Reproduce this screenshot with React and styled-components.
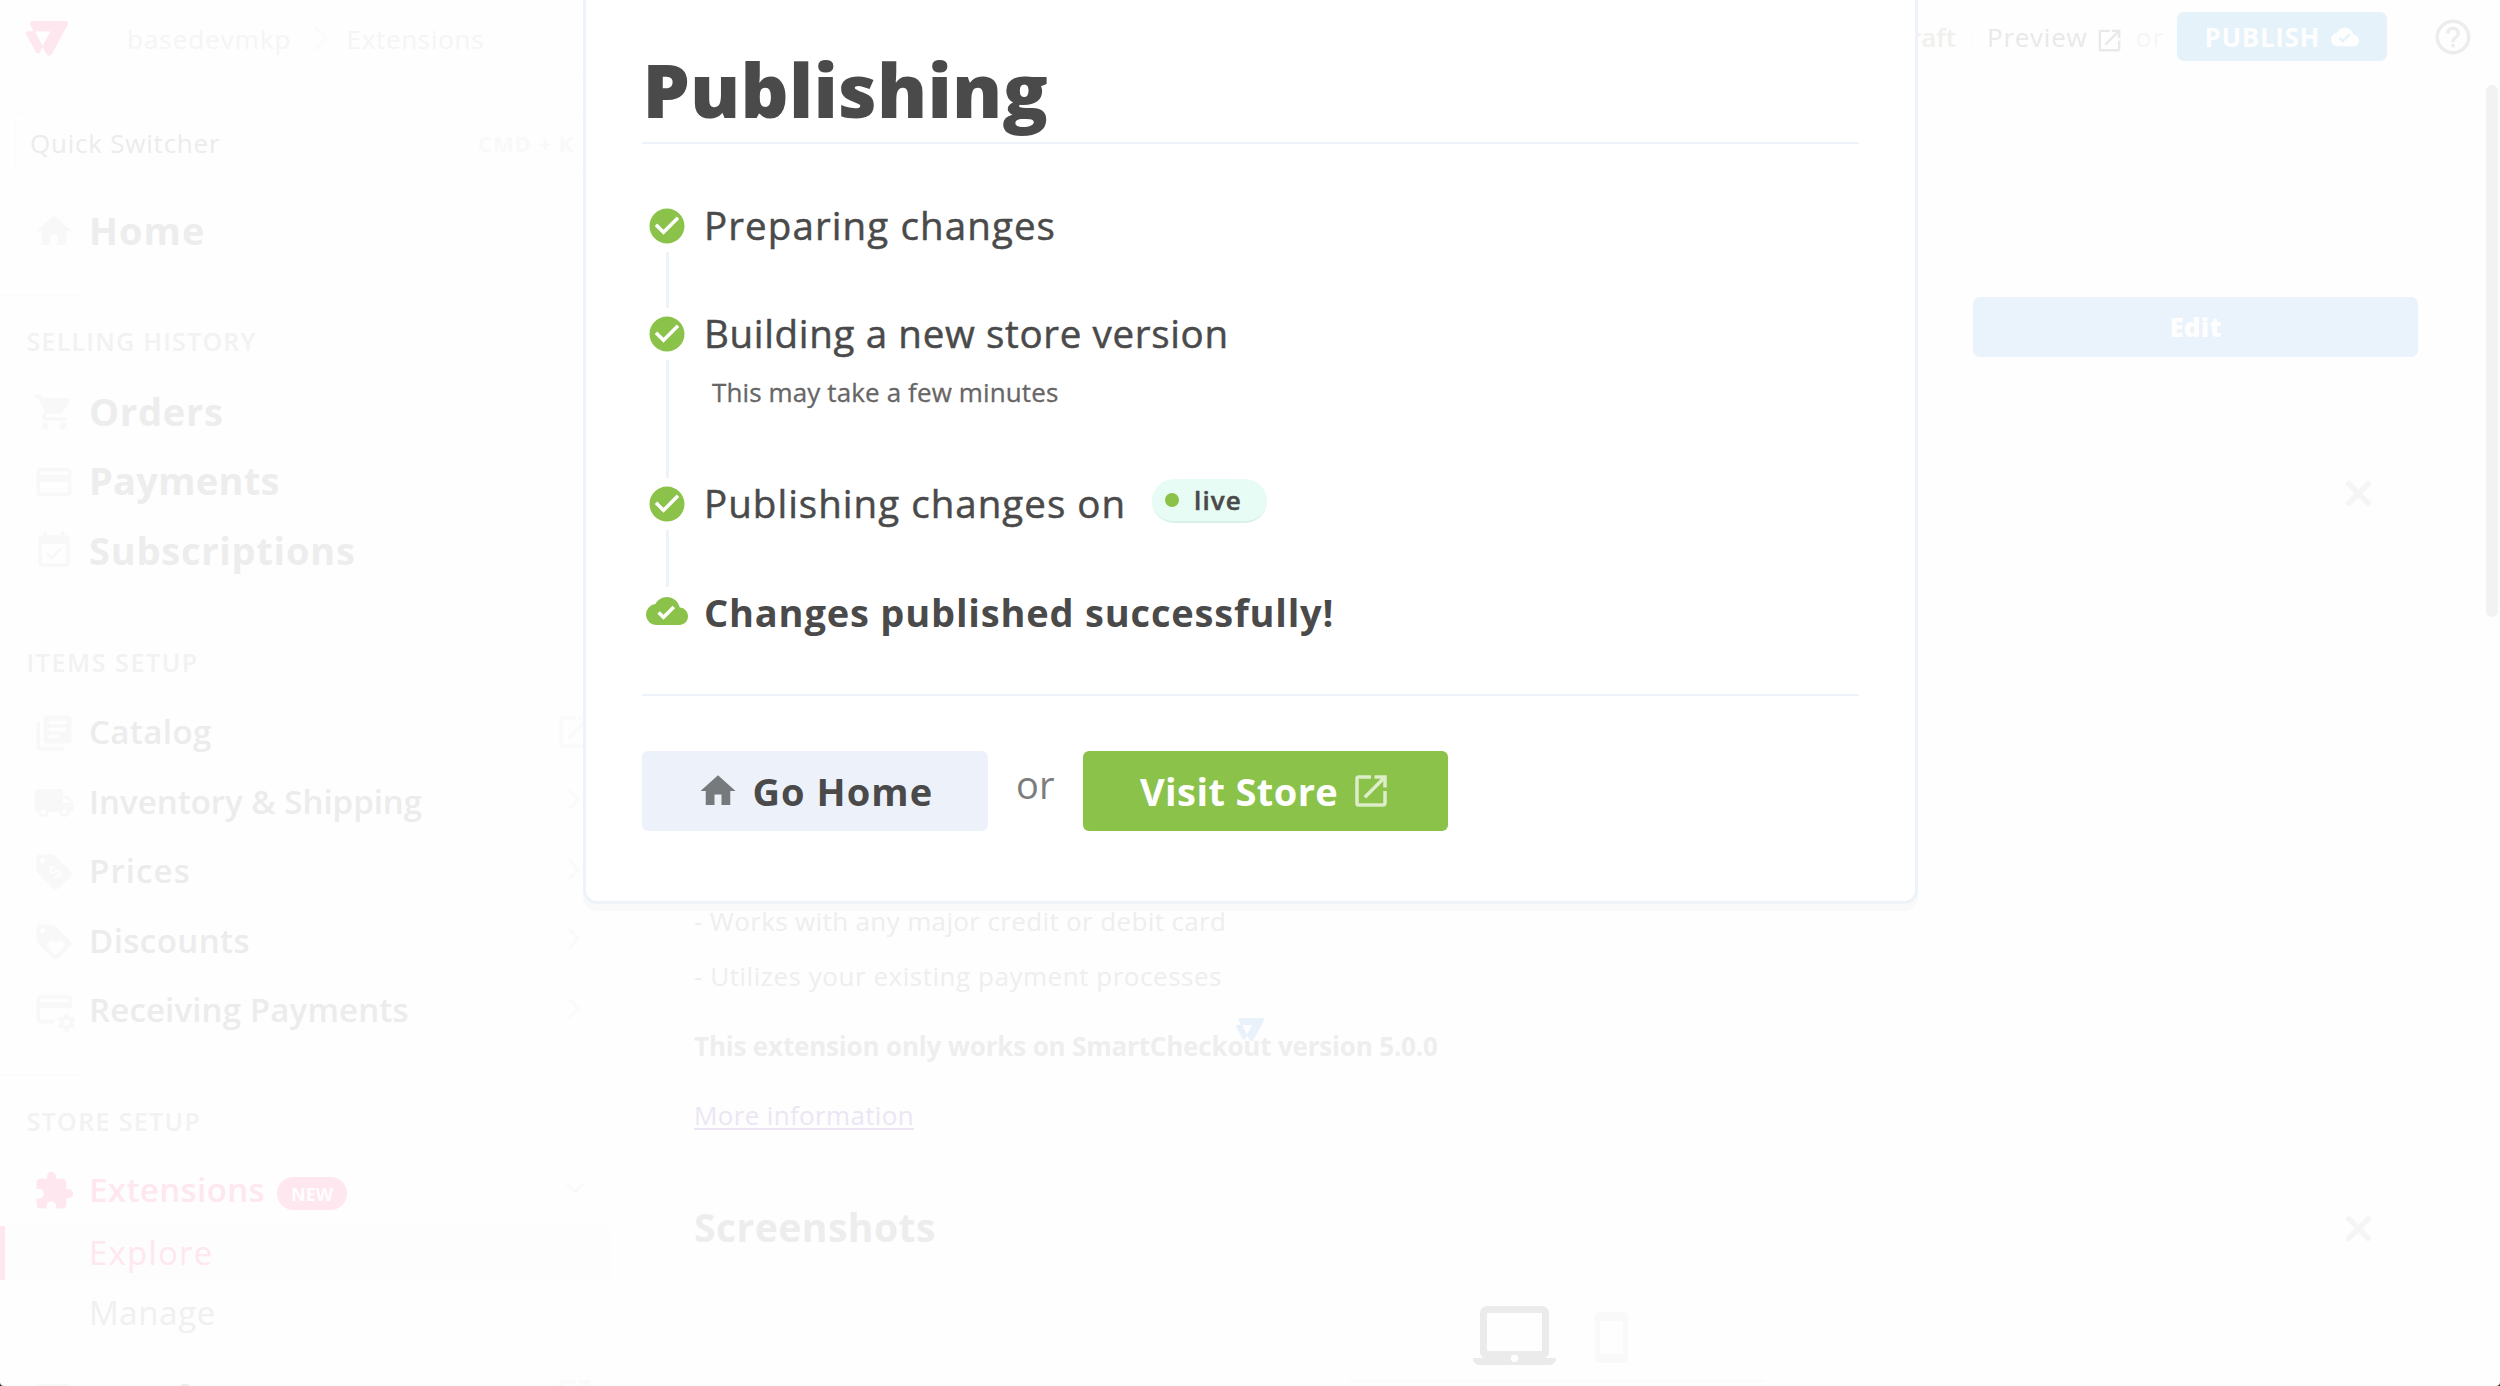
import React from 'react';
import styled, { createGlobalStyle, css } from 'styled-components';
import {
  MdHome,
  MdShoppingCart,
  MdEventAvailable,
  MdLibraryBooks,
  MdLocalShipping,
  MdLoyalty,
  MdExtension,
  MdOpenInNew,
  MdCheckCircle,
  MdCloudDone,
  MdHelpOutline,
} from 'react-icons/md';

const c = {
  page: '#fefefe',
  ghost: '#ececec',
  pink: '#ffe7ef',
  line: '#edf3f9',
  ink: '#4a4a4a',
  green: '#8bc34a',
};

const GlobalStyle = createGlobalStyle`
  * { box-sizing: border-box; }
  html { background: #2b2b2b; }
  body { margin: 0; }
  svg { display: block; flex: none; }
`;

const Page = styled.div`
  position: relative;
  display: flex;
  flex-direction: column;
  height: 100vh;
  overflow: hidden;
  background: ${c.page};
  border-radius: 0 0 4px 4px;
  font-family: 'Open Sans', 'Noto Sans', sans-serif;
  color: ${c.ghost};
  white-space: nowrap;
`;

const Label = styled.span`
  letter-spacing: ${(p) => p.$track || 0}px;
`;

/* ---------- top bar ---------- */

const TopBar = styled.header`
  flex: none;
  display: flex;
  align-items: flex-start;
  height: 80px;
  border-bottom: 2px solid #fdfdfd;
  font-size: 26px;
`;

const LogoCell = styled.div`
  width: 98px;
  height: 78px;
  padding: 21px 0 0 26px;
  border-right: 1px solid #fcfcfc;
`;

const Crumbs = styled.nav`
  display: flex;
  align-items: center;
  height: 78px;
  padding-left: 29px;
  color: #f5f5f5;
`;

const CrumbArrow = styled.svg`
  margin: 0 17px 2px 22px;
`;

const TopActions = styled.div`
  display: flex;
  align-items: center;
  height: 73px;
  margin-left: auto;
  padding-right: 26px;
`;

const DraftTag = styled.span`
  color: #f0f0ec;
  font-weight: 600;
`;

const Divider = styled.i`
  width: 1px;
  height: ${(p) => p.$h}px;
  margin: 0 14px 0 ${(p) => p.$before}px;
  background: #fcfcfc;
`;

const PreviewLink = styled.a`
  display: flex;
  align-items: center;
  justify-content: space-between;
  width: 136.5px;
  color: #e9e9e9;

  svg {
    margin-top: 7px;
  }
`;

const OrWord = styled.span`
  width: 53px;
  text-align: center;
  color: #f6f6f6;
`;

const PublishButton = styled.button`
  display: flex;
  align-items: center;
  justify-content: space-between;
  width: 210.5px;
  height: 49px;
  padding: 0 28px;
  border: 0;
  border-radius: 7px;
  background: #e5f2fa;
  color: ${c.page};
  font: 700 26px 'Open Sans', sans-serif;
`;

const HelpCell = styled.div`
  display: flex;
  align-items: center;
  color: #ededed;
  padding-left: 15px;
`;

/* ---------- sidebar ---------- */

const Body = styled.div`
  flex: 1;
  min-height: 0;
  display: flex;
`;

const Sidebar = styled.aside`
  flex: none;
  display: flex;
  flex-direction: column;
  width: 610px;
  padding-top: 32px;
`;

const Switcher = styled.div`
  flex: none;
  display: flex;
  align-items: center;
  justify-content: space-between;
  height: 62px;
  margin: 0 0 21px 15px;
  padding: 0 36px 0 14px;
  border: 1px solid #fcfcfc;
  border-right: 0;
  border-radius: 4px 0 0 4px;
  font-size: 26px;
`;

const Shortcut = styled.span`
  color: #f9f9f9;
  font-size: 22px;
  font-weight: 700;
`;

const Section = styled.section`
  flex: none;
  margin-top: ${(p) => p.$gap || 29.5}px;
  background: linear-gradient(#fcfcfc, #fcfcfc) no-repeat 0 0 / 82px 2px;
  padding-top: 2px;
`;

const SectionTitle = styled.h3`
  display: flex;
  align-items: center;
  height: 80px;
  margin: 0;
  padding: 10px 0 0 26.5px;
  color: #f2f2f2;
  font-size: 25px;
  font-weight: 600;
`;

const NavRow = styled.a`
  flex: none;
  display: flex;
  align-items: center;
  height: ${(p) => p.$h || 69.5}px;
  padding: 0 14px 0 33px;
  font-size: ${(p) => (p.$big ? 38 : 33)}px;
  font-weight: ${(p) => (p.$big ? 700 : 600)};
  color: ${(p) => (p.$active ? c.pink : p.$big ? '#ededed' : c.ghost)};
`;

const NavIcon = styled.span`
  width: 56px;
  padding-top: 3px;
  color: ${(p) => (p.$active ? c.pink : '#f8f8f8')};
`;

const NavEnd = styled.span`
  margin-left: auto;
  color: #fafafa;
`;

const NewBadge = styled.span`
  display: flex;
  align-items: center;
  justify-content: center;
  width: 70px;
  height: 33px;
  margin: 8px 0 0 12px;
  border-radius: 17px;
  background: ${c.pink};
  color: ${c.page};
  font-size: 18px;
  font-weight: 700;
`;

const SubRow = styled.a`
  flex: none;
  display: flex;
  align-items: center;
  height: 54px;
  margin-top: ${(p) => p.$gap}px;
  padding-left: 84px;
  border-left: 5px solid transparent;
  font-size: 33px;
  color: #f0f0f0;
  ${(p) =>
    p.$active &&
    css`
      border-left-color: ${c.pink};
      background: #fdfdfd;
      color: ${c.pink};
    `}
`;

/* ---------- main column ---------- */

const Main = styled.main`
  position: relative;
  z-index: 1;
  flex: 1;
  display: flex;
  flex-direction: column;
  padding: 217px 82px 0 84px;
`;

const EditButton = styled.button`
  flex: none;
  align-self: flex-end;
  width: 445px;
  height: 60px;
  border: 0;
  border-radius: 7px;
  background: #eaf2fc;
  color: ${c.page};
  font: 800 26px 'Open Sans', sans-serif;
`;

const PanelHead = styled.div`
  flex: none;
  display: flex;
  align-items: center;
  justify-content: space-between;
  height: ${(p) => p.$h}px;
  padding-right: 46px;
  font-size: 39px;
  font-weight: 700;
  color: #ededed;

  svg {
    margin-top: 3px;
  }
`;

const Article = styled.div`
  flex: none;
  height: 528.5px;
  padding-top: 266.5px;
  border-bottom: 1px solid #fcfcfc;
  font-size: 26px;
  line-height: 55.5px;
  color: #eeeeee;
`;

const Line = styled.div``;

const Note = styled.p`
  margin: 14px 0;
  font-weight: 700;
`;

const MoreLink = styled.a`
  color: #ece6f4;
  text-decoration: underline;
  text-decoration-thickness: 2px;
  text-underline-offset: 3px;
`;

const Devices = styled.div`
  align-self: center;
  display: flex;
  align-items: flex-start;
  justify-content: center;
  gap: 39px;
  width: 417px;
  height: 84px;
  padding: 8px 12px 0 0;
  border-bottom: 2px solid #fbfbfb;
`;

const PhoneShape = styled.svg`
  margin-top: 6px;
`;

const ScrollThumb = styled.div`
  position: absolute;
  top: 85px;
  right: 2px;
  width: 12px;
  height: 532px;
  border-radius: 6px;
  background: #f2f2f2;
`;

const Loader = styled.div`
  position: absolute;
  left: 1236px;
  top: 1018px;
`;

/* ---------- publishing dialog ---------- */

const Dialog = styled.section`
  position: absolute;
  z-index: 2;
  top: -20px;
  left: 583px;
  width: 1334.5px;
  height: 924px;
  padding: 56px 56px 0 55.5px;
  border: 3px solid ${c.line};
  border-radius: 14px;
  background: #fff;
  box-shadow: 0 7px 1px #f9f9f9;
  color: ${c.ink};
`;

const DialogTitle = styled.h1`
  margin: 0;
  padding: 0 0 3px 1px;
  border-bottom: 2px solid ${c.line};
  font-size: 75px;
  line-height: 100px;
  font-weight: 800;
`;

const Steps = styled.ol`
  display: flex;
  flex-direction: column;
  height: 551.5px;
  margin: 0;
  padding: 56px 0 0;
  list-style: none;
  border-bottom: 2px solid ${c.line};
`;

const Step = styled.li`
  display: grid;
  grid-template-columns: 51px 1fr;
  column-gap: 11.5px;
  height: ${(p) => p.$h}px;
`;

const Marker = styled.div`
  display: flex;
  flex-direction: column;
  align-items: center;
  color: ${c.green};

  svg {
    margin: ${(p) => (p.$last ? 3 : 4.5)}px 0 3px;
  }
`;

const Connector = styled.i`
  flex: 1;
  width: 3px;
  margin-top: 2px;
  background: ${c.line};
`;

const StepTitle = styled.div`
  display: flex;
  height: 50px;
  line-height: 50px;
  font-size: ${(p) => (p.$done ? 38 : 38.5)}px;
  font-weight: ${(p) => (p.$done ? 700 : 400)};
  -webkit-text-stroke: ${(p) => (p.$done ? 0 : 0.5)}px currentColor;
`;

const StepHint = styled.div`
  padding: 17px 0 0 8px;
  font-size: 26px;
  line-height: 34px;
  color: #666;
  -webkit-text-stroke: 0.3px currentColor;
`;

const LiveBadge = styled.span`
  display: flex;
  align-items: center;
  gap: 15px;
  width: 115px;
  height: 44px;
  margin: 1px 0 0 26px;
  padding-left: 13px;
  border-bottom: 2px solid #d8f2e9;
  border-radius: 22px;
  background: #e7fcf5;
  font-size: 26px;
  line-height: 40px;
  font-weight: 600;

  &::before {
    content: '';
    width: 14px;
    height: 14px;
    border-radius: 50%;
    background: ${c.green};
  }
`;

const Actions = styled.div`
  display: flex;
  align-items: center;
  padding-top: 55.5px;
  font-size: 38px;
`;

const ActionButton = styled.button`
  display: flex;
  align-items: center;
  gap: ${(p) => (p.$primary ? 12 : 14)}px;
  height: 80px;
  width: ${(p) => (p.$primary ? 365 : 346)}px;
  padding: 0 0 0 ${(p) => (p.$primary ? 57 : 55)}px;
  border: 0;
  border-radius: 6px;
  background: ${(p) => (p.$primary ? c.green : '#edf1fa')};
  color: ${(p) => (p.$primary ? '#fff' : c.ink)};
  font: 700 38px 'Open Sans', sans-serif;

  svg {
    color: ${(p) => (p.$primary ? '#dcedc8' : '#777a7d')};
  }
`;

const ActionOr = styled.span`
  width: 95.5px;
  padding-bottom: 15px;
  text-align: center;
  color: #7d7d7d;
`;

/* ---------- drawings ---------- */

const BrandMark = ({ width, color }) => (
  <svg width={width} height={width * 0.835} viewBox="48 47 127 106" fill={color}>
    <path
      fillRule="evenodd"
      d="M70 47H166a8 8 0 0 1 8 12L126 147a9 9 0 0 1-16 0L98 125 90 142a7 7 0 0 1-12 0L49 88a6 6 0 0 1 5-10H70L62 60a8 8 0 0 1 8-13zM75 79 98 122 122 79z"
    />
  </svg>
);

const Chevron = ({ down }) => (
  <svg width="42" height="42" viewBox="0 0 42 42" fill="none" stroke="currentColor" strokeWidth="3">
    {down ? <path d="M12 14l9 9 9-9" /> : <path d="M15 10l9 9.500-9 9.500" />}
  </svg>
);

const CardIcon = () => (
  <svg width="42" height="42" viewBox="0 0 24 24" fill="currentColor">
    <path d="M20 4H4c-1.110 0-2 .89-2 2v12c0 1.110.89 2 2 2h16c1.110 0 2-.89 2-2V6c0-1.110-.89-2-2-2zm0 14H4v-6h16v6zm0-10H4V6h16v2z" />
  </svg>
);

const CardGearIcon = () => (
  <svg width="46" height="46" viewBox="0 0 26 26" fill="currentColor">
    <path d="M20 4H4c-1.110 0-2 .89-2 2v12c0 1.110.89 2 2 2h8v-2H4v-6.500h18V6c0-1.110-.89-2-2-2zm0 4H4V6h16z" />
    <g transform="translate(19 19.500)">
      <circle r="2.700" fill="none" stroke="currentColor" strokeWidth="2" />
      {[0, 60, 120, 180, 240, 300].map((a) => (
        <rect key={a} x="-1.200" y="-5" width="2.400" height="2.200" transform={`rotate(${a})`} />
      ))}
    </g>
  </svg>
);

const PriceTagIcon = () => (
  <svg width="42" height="42" viewBox="0 0 24 24" fill="currentColor">
    <path
      fillRule="evenodd"
      d="M21.410 11.580l-9-9C12.050 2.220 11.550 2 11 2H4c-1.100 0-2 .9-2 2v7c0 .55.22 1.050.59 1.420l9 9c.36.36.86.58 1.410.58.55 0 1.050-.22 1.410-.59l7-7c.37-.36.59-.86.59-1.410 0-.55-.23-1.060-.59-1.420zM5.500 7C4.670 7 4 6.330 4 5.500S4.670 4 5.500 4 7 4.670 7 5.500 6.330 7 5.500 7z"
    />
    <path
      d="M14.500 10.200c-.5-1.400-3.900-1.400-3.900.4 0 1.900 4.200 1 4.200 3 0 1.900-3.900 1.900-4.300.3M12.650 8v1.300M12.650 14.900v1.300"
      transform="rotate(-45 12.600 12.100)"
      fill="none"
      stroke={c.page}
      strokeWidth="1.100"
    />
  </svg>
);

const WindowIcon = () => (
  <svg width="42" height="42" viewBox="0 0 24 24" fill="currentColor">
    <path d="M20 4H4c-1.100 0-2 .9-2 2v12c0 1.100.9 2 2 2h16c1.100 0 2-.9 2-2V6c0-1.100-.9-2-2-2zm-5 14H4v-4h11v4zm0-5H4V9h11v4zm5 5h-4V9h4v9z" />
  </svg>
);

const CloseIcon = () => (
  <svg width="27" height="27" viewBox="0 0 27 27" stroke="#f5f5f5" strokeWidth="5.500">
    <path d="M2 2l23 23M25 2L2 25" />
  </svg>
);

const Laptop = () => (
  <svg width="83" height="59" viewBox="0 0 83 59" fill="#ebebeb">
    <path
      fillRule="evenodd"
      d="M14 0h55a7 7 0 0 1 7 7v38a7 7 0 0 1-4 7h11q0 6-6 7H6q-6-1-6-7h11a7 7 0 0 1-4-7V7a7 7 0 0 1 7-7zM14 7v38h55V7zM41.500 48.500a3.800 3.800 0 1 0 .01 0z"
    />
  </svg>
);

const Phone = () => (
  <PhoneShape width="33" height="51" viewBox="0 0 33 51" fill="#f9f9f9">
    <path fillRule="evenodd" d="M5 0h23a5 5 0 0 1 5 5v41a5 5 0 0 1-5 5H5a5 5 0 0 1-5-5V5a5 5 0 0 1 5-5zM5 9v33h23V9z" />
  </PhoneShape>
);

/* ---------- data ---------- */

const sections = [
  {
    title: 'SELLING HISTORY',
    track: 1.24,
    big: true,
    rows: [
      { text: 'Orders', track: 0.75, icon: <MdShoppingCart size={42} /> },
      { text: 'Payments', track: 0.25, icon: <CardIcon /> },
      { text: 'Subscriptions', track: 0.76, icon: <MdEventAvailable size={42} /> },
    ],
  },
  {
    title: 'ITEMS SETUP',
    track: 1.6,
    gap: 30.5,
    rows: [
      { text: 'Catalog', track: 0.4, icon: <MdLibraryBooks size={42} />, end: <MdOpenInNew size={42} /> },
      { text: 'Inventory & Shipping', track: 0, icon: <MdLocalShipping size={42} />, end: <Chevron /> },
      { text: 'Prices', track: 1.1, icon: <PriceTagIcon />, end: <Chevron /> },
      { text: 'Discounts', track: 0.45, icon: <MdLoyalty size={42} />, end: <Chevron /> },
      { text: 'Receiving Payments', track: 0.15, icon: <CardGearIcon />, end: <Chevron /> },
    ],
  },
];

const NavItem = ({ text, track, icon, end, big }) => (
  <NavRow $big={big}>
    <NavIcon>{icon}</NavIcon>
    <Label $track={track}>{text}</Label>
    {end && <NavEnd>{end}</NavEnd>}
  </NavRow>
);

const StepItem = ({ height, text, track, hint, last, children }) => (
  <Step $h={height}>
    <Marker $last={last}>
      {last ? <MdCloudDone size={42} /> : <MdCheckCircle size={42} />}
      {!last && <Connector />}
    </Marker>
    <div>
      <StepTitle $done={last}>
        <Label $track={track}>{text}</Label>
        {children}
      </StepTitle>
      {hint && (
        <StepHint>
          <Label $track={0.12}>{hint}</Label>
        </StepHint>
      )}
    </div>
  </Step>
);

export default function App() {
  return (
    <Page>
      <GlobalStyle />
      <TopBar>
        <LogoCell>
          <BrandMark width={42} color={c.pink} />
        </LogoCell>
        <Crumbs>
          <Label $track={1}>basedevmkp</Label>
          <CrumbArrow width="16" height="26" viewBox="0 0 16 26" fill="none" stroke="#fbfbfb" strokeWidth="3">
            <path d="M2 1.500l11 11.500L2 24.500" />
          </CrumbArrow>
          <Label $track={0.7}>Extensions</Label>
        </Crumbs>
        <TopActions>
          <DraftTag>Draft</DraftTag>
          <Divider $h={24} $before={16} />
          <PreviewLink>
            <Label $track={0.75}>Preview</Label>
            <MdOpenInNew size={29} />
          </PreviewLink>
          <OrWord>
            <Label $track={1}>or</Label>
          </OrWord>
          <PublishButton>
            <Label $track={0.66}>PUBLISH</Label>
            <MdCloudDone size={28} />
          </PublishButton>
          <Divider $h={73} $before={15} />
          <HelpCell>
            <MdHelpOutline size={42} />
          </HelpCell>
        </TopActions>
      </TopBar>

      <Body>
        <Sidebar>
          <Switcher>
            <Label $track={0.78}>Quick Switcher</Label>
            <Shortcut>
              <Label $track={0.9}>CMD + K</Label>
            </Shortcut>
          </Switcher>
          <NavItem text="Home" track={1} big icon={<MdHome size={42} />} />
          {sections.map((s) => (
            <Section key={s.title} $gap={s.gap}>
              <SectionTitle>
                <Label $track={s.track}>{s.title}</Label>
              </SectionTitle>
              {s.rows.map((r) => (
                <NavItem key={r.text} big={s.big} {...r} />
              ))}
            </Section>
          ))}
          <Section $gap={29}>
            <SectionTitle>
              <Label $track={1.37}>STORE SETUP</Label>
            </SectionTitle>
            <NavRow $active $h={68}>
              <NavIcon $active>
                <MdExtension size={42} />
              </NavIcon>
              <Label $track={0.4}>Extensions</Label>
              <NewBadge>NEW</NewBadge>
              <NavEnd>
                <Chevron down />
              </NavEnd>
            </NavRow>
            <SubRow $active $gap={2}>
              <Label $track={1.2}>Explore</Label>
            </SubRow>
            <SubRow $gap={6}>
              <Label $track={0.65}>Manage</Label>
            </SubRow>
          </Section>
          <NavRow $h={113}>
            <NavIcon>
              <WindowIcon />
            </NavIcon>
            <Label $track={0.4}>Storefront</Label>
            <NavEnd>
              <MdOpenInNew size={42} />
            </NavEnd>
          </NavRow>
        </Sidebar>

        <Main>
          <EditButton>
            <Label $track={0.19}>Edit</Label>
          </EditButton>
          <PanelHead $h={270}>
            <span />
            <CloseIcon />
          </PanelHead>
          <Article>
            <Line>
              <Label $track={0.36}>- Works with any major credit or debit card</Label>
            </Line>
            <Line>
              <Label $track={0.53}>- Utilizes your existing payment processes</Label>
            </Line>
            <Note>
              <Label $track={-0.18}>This extension only works on SmartCheckout version 5.0.0</Label>
            </Note>
            <MoreLink>
              <Label $track={0.35}>More information</Label>
            </MoreLink>
          </Article>
          <PanelHead $h={142}>
            <Label $track={0.5}>Screenshots</Label>
            <CloseIcon />
          </PanelHead>
          <Devices>
            <Laptop />
            <Phone />
          </Devices>
        </Main>
      </Body>

      <Loader>
        <BrandMark width={28} color="#e9f1fa" />
      </Loader>
      <ScrollThumb />

      <Dialog>
        <DialogTitle>
          <Label $track={0.2}>Publishing</Label>
        </DialogTitle>
        <Steps>
          <StepItem height={108} text="Preparing changes" track={1.1} />
          <StepItem
            height={170}
            text="Building a new store version"
            track={0.66}
            hint="This may take a few minutes"
          />
          <StepItem height={109} text="Publishing changes on" track={1.02}>
            <LiveBadge>
              <Label $track={1.1}>live</Label>
            </LiveBadge>
          </StepItem>
          <StepItem height={50} text="Changes published successfully!" track={0.82} last />
        </Steps>
        <Actions>
          <ActionButton>
            <MdHome size={42} />
            <Label $track={1.05}>Go Home</Label>
          </ActionButton>
          <ActionOr>or</ActionOr>
          <ActionButton $primary>
            <Label $track={0.4}>Visit Store</Label>
            <MdOpenInNew size={42} />
          </ActionButton>
        </Actions>
      </Dialog>
    </Page>
  );
}
